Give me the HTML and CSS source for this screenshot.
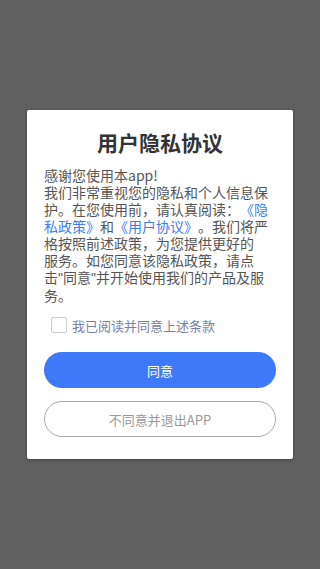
FILE: index.html
```html
<!DOCTYPE html>
<html lang="zh-CN">
    <head>
        <meta charset="UTF-8">
        <title>用户隐私协议</title>
        <link rel="stylesheet" href="styles.css">
    </head>
    <body>
        <!-- Dimmed backdrop with the privacy dialog -->
        <div id="mask">
            <div id="dialog">
                <h1 id="dialog-title">用户隐私协议</h1>
                <!-- Line breaks follow the app's own wrapping -->
                <p id="dialog-text">感谢您使用本app!<br>我们非常重视您的隐私和个人信息保<br>护。在您使用前，请认真阅读：<a href="#">《隐<br>私政策》</a>和<a href="#">《用户协议》</a>。我们将严<br>格按照前述政策，为您提供更好的<br>服务。如您同意该隐私政策，请点<br>击<span class="quote">"</span>同意<span class="quote">"</span>并开始使用我们的产品及服<br>务。</p>
                <label id="agree-row"><input type="checkbox" id="agree-box"><span>我已阅读并同意上述条款</span></label>
                <button class="btn btn-agree">同意</button>
                <button class="btn btn-exit">不同意并退出APP</button>
            </div>
        </div>
    </body>
</html>
```
FILE: styles.css
```css
* {
    margin: 0;
    padding: 0;
    box-sizing: border-box;
}

body {
    font: 14px "Noto Sans CJK SC", "Liberation Sans", sans-serif;
    text-spacing-trim: space-all;
    background-color: #606060;
}

#mask {
    display: flex;
    align-items: flex-start;
    justify-content: center;
    width: 320px;
    height: 569px;
    padding-top: 110px;
}

#dialog {
    display: flex;
    flex-direction: column;
    width: 266px;
    padding: 18px 17px 22px 17px;
    border-radius: 2px;
    background-color: white;
    box-shadow: 0 1px 3px rgba(0, 0, 0, .35);
}

#dialog-title {
    height: 28px;
    line-height: 28px;
    text-align: center;
    font-size: 21px;
    font-weight: bold;
    color: #333;
}

#dialog-text {
    margin-top: 11px;
    line-height: 17px;
    color: #555;
    white-space: nowrap;
}

#dialog-text a {
    text-decoration: none;
    color: #3c7cf6;
}

.quote {
    font-family: "Liberation Sans", sans-serif;
}

#agree-row {
    display: flex;
    align-items: center;
    height: 20px;
    margin-top: 11px;
    padding-left: 7px;
    font-size: 13px;
    color: #7682a0;
}

#agree-box {
    appearance: none;
    width: 16px;
    height: 16px;
    margin-right: 5px;
    border: 1px solid #ccc;
    border-radius: 2px;
    background-color: white;
}

.btn {
    height: 36px;
    border-radius: 18px;
    font: 13px "Noto Sans CJK SC", "Liberation Sans", sans-serif;
}

.btn-agree {
    margin-top: 17px;
    border: none;
    color: white;
    background-color: #3d7afa;
}

.btn-exit {
    margin-top: 13px;
    border: 1px solid #aaa;
    color: #999;
    background-color: white;
}
```
